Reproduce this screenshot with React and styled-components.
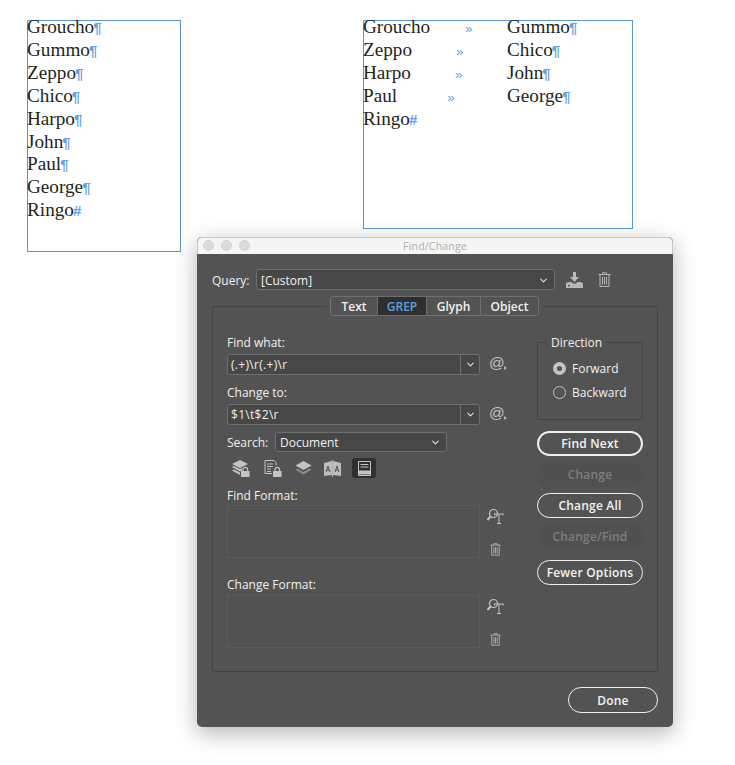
import React from 'react'
import styled, { createGlobalStyle } from 'styled-components'
import { ChevronDown } from 'lucide-react'

const GlobalStyle = createGlobalStyle`
  html, body { margin: 0; padding: 0; background: #ffffff; }
  body { font-family: "Open Sans", "Liberation Sans", sans-serif; }
`

const Board = styled.div`
  position: relative;
  width: 735px;
  height: 765px;
  overflow: hidden;
`

const Frame = styled.div`
  position: absolute;
  left: ${p => p.$x}px;
  top: 20px;
  width: ${p => p.$w}px;
  height: ${p => p.$h}px;
  box-sizing: border-box;
  border: 1px solid #5b94d1;
  font-family: "Liberation Serif", serif;
  font-size: 19.2px;
  line-height: 22.9px;
  color: #231f20;
`

const Lines = styled.div`
  margin: -5px 0 0 -1px;
`

const Line = styled.div`
  white-space: nowrap;
`

const TabLine = styled.div`
  display: grid;
  grid-template-columns: 144px 1fr;
  white-space: nowrap;
`

const Mark = styled.span`
  font-family: "Liberation Sans", sans-serif;
  font-weight: 700;
  font-size: 15px;
  line-height: 0;
  color: #64a0e6;
  margin-left: -1px;
`

const TabMark = styled.span`
  font-family: "Liberation Sans", sans-serif;
  font-size: 13px;
  line-height: 0;
  color: #64a0e6;
  margin-left: ${p => p.$gap}px;
`

const Shadow = styled.div`
  position: absolute;
  left: 197px;
  top: 237px;
  width: 476px;
  height: 490px;
  border-radius: 5px;
  box-shadow: 0 6px 22px rgba(0, 0, 0, 0.3);
`

const Dialog = styled.div`
  position: absolute;
  left: 197px;
  top: 237px;
  width: 476px;
  height: 490px;
  display: flex;
  flex-direction: column;
  background: #535353;
  border-radius: 5px;
  overflow: hidden;
  color: #f0f0f0;
  font-size: 12px;
`

const TitleBar = styled.div`
  height: 17px;
  flex: none;
  box-sizing: border-box;
  position: relative;
  display: flex;
  align-items: center;
  justify-content: center;
  background: #f5f5f5;
  border: 1px solid #c9c9c9;
  border-bottom: none;
  border-radius: 5px 5px 0 0;
  color: #aeaeae;
  font-size: 10.5px;
  letter-spacing: 0.2px;
`

const Lights = styled.div`
  position: absolute;
  left: 5px;
  top: 2px;
  display: flex;
  gap: 7px;
`

const Light = styled.span`
  width: 11px;
  height: 11px;
  border-radius: 50%;
  background: #dcdcdc;
  border: 1px solid #d2d2d2;
  box-sizing: border-box;
`

const Body = styled.div`
  padding: 15px 15px 0;
  display: flex;
  flex-direction: column;
`

const Row = styled.div`
  display: flex;
  align-items: center;
  margin-top: ${p => p.$mt || 0}px;
  height: ${p => p.$h || 21}px;
`

const Label = styled.div`
  height: 14px;
  line-height: 16px;
  margin-top: ${p => p.$mt || 0}px;
  font-weight: 500;
  white-space: nowrap;
`

const InlineLabel = styled.span`
  width: ${p => p.$w}px;
  padding-top: ${p => p.$pt || 0}px;
  font-weight: 500;
  flex: none;
  white-space: nowrap;
`

const Select = styled.div`
  width: ${p => p.$w}px;
  height: ${p => p.$h || 21}px;
  box-sizing: border-box;
  flex: none;
  display: flex;
  align-items: center;
  justify-content: space-between;
  padding: ${p => p.$pt || 0}px 5px 0 4px;
  background: #474747;
  border: 1px solid #6f6f6f;
  border-radius: 3px;
  font-weight: 500;
`

const Combo = styled.div`
  width: 253px;
  height: 21px;
  box-sizing: border-box;
  flex: none;
  display: flex;
  align-items: center;
  background: #474747;
  border: 1px solid #6f6f6f;
  border-radius: 3px;
  letter-spacing: 0.3px;
  font-weight: 500;
`

const ComboText = styled.span`
  flex: 1;
  padding-left: 3px;
`

const ComboArrow = styled.span`
  width: 18px;
  height: 100%;
  display: flex;
  align-items: center;
  justify-content: center;
  border-left: 1px solid #6f6f6f;
`

const Chevron = styled(ChevronDown)`
  width: 11px;
  height: 11px;
  color: #e6e6e6;
  stroke-width: 2.2;
`

const IconSlot = styled.span`
  display: flex;
  align-items: center;
  margin-left: ${p => p.$ml || 0}px;
  color: #b9b9b9;
`

const AtIcon = styled.span`
  position: relative;
  margin-left: 9px;
  margin-top: -4px;
  font-family: "Liberation Sans", sans-serif;
  font-size: 15.5px;
  color: #c0c0c0;
  width: 17px;
  line-height: 18px;
`

const ArrowTip = styled.i`
  position: absolute;
  left: 15px;
  top: 12px;
  width: 0;
  height: 0;
  border-left: 3px solid #b9b9b9;
  border-top: 2.5px solid transparent;
  border-bottom: 2.5px solid transparent;
`

const TabsRow = styled.div`
  position: relative;
  z-index: 1;
  margin-top: 6px;
  display: flex;
  justify-content: center;
  height: 20px;
  padding-right: 1px;
`

const Tabs = styled.div`
  display: flex;
  height: 20px;
  box-sizing: border-box;
  border: 1px solid #6f6f6f;
  border-radius: 3px;
  background: #535353;
  box-shadow: 0 0 0 3px #535353;
  overflow: hidden;
`

const Tab = styled.div`
  width: ${p => p.$w}px;
  box-sizing: border-box;
  display: flex;
  align-items: center;
  justify-content: center;
  font-weight: 600;
  background: ${p => (p.$active ? '#2f2f2f' : 'transparent')};
  color: ${p => (p.$active ? '#5ba2dc' : '#f0f0f0')};
  border-left: ${p => (p.$first ? 'none' : '1px solid #6f6f6f')};
`

const Group = styled.div`
  margin-top: -10px;
  height: 366px;
  box-sizing: border-box;
  border: 1px solid #434343;
  border-radius: 2px;
  padding: 28px 14px 0 14px;
  display: flex;
  justify-content: space-between;
`

const LeftColumn = styled.div`
  width: 280px;
  display: flex;
  flex-direction: column;
`

const RightColumn = styled.div`
  width: 106px;
  display: flex;
  flex-direction: column;
  padding-top: 7px;
`

const ScopeBar = styled.div`
  display: flex;
  align-items: center;
  margin-top: 6px;
  height: 20px;
`

const ScopeButton = styled.span`
  width: ${p => p.$w}px;
  height: 20px;
  flex: none;
  display: flex;
  align-items: center;
  justify-content: center;
  border-radius: 3px;
  margin-left: ${p => p.$ml || 0}px;
  background: ${p => (p.$active ? '#303030' : 'transparent')};
`

const FormatRow = styled.div`
  display: flex;
  margin-top: ${p => p.$mt || 3}px;
  height: 53px;
`

const FormatBox = styled.div`
  width: 253px;
  box-sizing: border-box;
  flex: none;
  border: 1px solid #5b5b5b;
  background: #525252;
`

const FormatTools = styled.div`
  margin-left: 7px;
  display: flex;
  flex-direction: column;
  align-items: center;
  width: 16px;
  padding-top: 3px;
  gap: 19px;
`

const Direction = styled.div`
  position: relative;
  height: 78px;
  box-sizing: border-box;
  border: 1px solid #434343;
  border-radius: 2px;
  padding: 18px 0 0 15px;
  font-weight: 500;
`

const Legend = styled.span`
  position: absolute;
  left: 9px;
  top: -8px;
  padding: 0 4px;
  background: #535353;
  line-height: 16px;
`

const RadioRow = styled.div`
  display: flex;
  align-items: center;
  gap: 6px;
  height: 14px;
  margin-bottom: 10px;
`

const Radio = styled.span`
  width: 13px;
  height: 13px;
  box-sizing: border-box;
  border-radius: 50%;
  flex: none;
  border: ${p => (p.$on ? '4px solid #c4c4c4' : '1px solid #c4c4c4')};
  background: ${p => (p.$on ? '#535353' : 'transparent')};
`

const Pill = styled.div`
  width: ${p => p.$w || 106}px;
  height: ${p => p.$h || 25}px;
  box-sizing: border-box;
  flex: none;
  margin-top: ${p => p.$mt || 0}px;
  display: flex;
  align-items: center;
  justify-content: center;
  border-radius: 13px;
  font-weight: 600;
  letter-spacing: 0.2px;
  border: ${p => (p.$disabled ? 'none' : `${p.$thick ? 2 : 1}px solid #f0f0f0`)};
  background: ${p => (p.$disabled ? '#505050' : 'transparent')};
  color: ${p => (p.$disabled ? '#7d7d7d' : '#f4f4f4')};
`

const Footer = styled.div`
  display: flex;
  justify-content: flex-end;
  margin-top: 15px;
`

function TrashIcon({ size = 13 }) {
  return (
    <svg width={size} height={size * 1.15} viewBox="0 0 13 15" fill="none" stroke="currentColor" strokeWidth="1">
      <path d="M0.500 2.500h12M4.500 2.500V0.800h4v1.700M2 2.500v12h9v-12M4.500 5v7.500M6.500 5v7.500M8.500 5v7.500" />
    </svg>
  )
}

function DownloadIcon() {
  return (
    <svg width="17" height="16" viewBox="0 0 17 16" fill="currentColor">
      <path d="M7 0h3v5h3l-4.500 5L4 5h3z" />
      <path d="M3 10h2l3.500 2L12 10h2l3 1v5H0v-5z" />
      <rect x="2" y="13" width="2" height="1.400" fill="#535353" />
    </svg>
  )
}

function LockBadge({ x, y }) {
  return (
    <g transform={`translate(${x} ${y})`}>
      <path d="M2 4V2.600a2.300 2.300 0 0 1 4.600 0V4" fill="none" stroke="#c4c4c4" strokeWidth="1.200" />
      <rect x="0" y="4" width="8.600" height="6" rx="0.600" fill="#c4c4c4" />
    </g>
  )
}

function LayersLockIcon() {
  return (
    <svg width="18" height="18" viewBox="0 0 18 18">
      <path d="M8 1l8 4-8 4-8-4z" fill="#c4c4c4" />
      <path d="M0 8l2-1 6 3 2-1v2.500L8 12.500z" fill="#c4c4c4" />
      <path d="M0 11.500l2-1 6 3v2.500z" fill="#c4c4c4" />
      <LockBadge x={9} y={8} />
    </svg>
  )
}

function DocLockIcon() {
  return (
    <svg width="18" height="18" viewBox="0 0 18 18">
      <path d="M1 1.500h9l2 2v3M1 1.500v13h7" fill="none" stroke="#c4c4c4" strokeWidth="1" />
      <path d="M3 5h6M3 7.500h6M3 10h4M3 12.500h4" stroke="#c4c4c4" strokeWidth="1" />
      <LockBadge x={9} y={8} />
    </svg>
  )
}

function LayersIcon() {
  return (
    <svg width="17" height="16" viewBox="0 0 17 16">
      <path d="M8.500 1l8 4.500-8 4.500-8-4.500z" fill="#c4c4c4" />
      <path d="M2.500 8.500L8.500 12l6-3.500 2 1.200-8 4.800-8-4.800z" fill="#8c8c8c" />
    </svg>
  )
}

function BookIcon() {
  return (
    <svg width="19" height="17" viewBox="0 0 19 17">
      <path d="M1 3l8-2v14l-8 1zM18 3l-8-2v14l8 1z" fill="#bdbdbd" />
      <path d="M3 12l2-6 2 6M3.800 10h2.400M12 12l2-6 2 6M12.800 10h2.400" fill="none" stroke="#535353" strokeWidth="1" />
      <path d="M9.500 0v17" stroke="#c4c4c4" strokeWidth="0.800" />
    </svg>
  )
}

function PageIcon() {
  return (
    <svg width="13" height="15" viewBox="0 0 13 15" fill="none" stroke="#c4c4c4">
      <path d="M0.500 0.500h12v14h-12z" />
      <path d="M2.500 3.500h8M2.500 6h8" />
      <path d="M1 9.500h11v4H1z" fill="#c4c4c4" stroke="none" />
    </svg>
  )
}

function FindTypeIcon() {
  return (
    <svg width="17" height="16" viewBox="0 0 17 16" fill="none" stroke="#c4c4c4">
      <circle cx="6.500" cy="5.500" r="4" strokeWidth="1.200" />
      <path d="M3.500 8.500L0.500 12" strokeWidth="2" />
      <path d="M7 6h9.500M12 6v9M10 15.500h4M7.500 6v1.500M16 6v1.500" strokeWidth="1" />
    </svg>
  )
}

const single = ['Groucho', 'Gummo', 'Zeppo', 'Chico', 'Harpo', 'John', 'Paul', 'George']
const paired = [
  ['Groucho', 'Gummo', 35],
  ['Zeppo', 'Chico', 44],
  ['Harpo', 'John', 44],
  ['Paul', 'George', 50],
]

export default function App() {
  return (
    <Board>
      <GlobalStyle />
      <Frame $x={27} $w={154} $h={232}>
        <Lines>
          {single.map(name => (
            <Line key={name}>{name}<Mark>¶</Mark></Line>
          ))}
          <Line>Ringo<Mark>#</Mark></Line>
        </Lines>
      </Frame>
      <Frame $x={363} $w={270} $h={209}>
        <Lines>
          {paired.map(([a, b, gap]) => (
            <TabLine key={a}>
              <span>{a}<TabMark $gap={gap}>»</TabMark></span>
              <span>{b}<Mark>¶</Mark></span>
            </TabLine>
          ))}
          <Line>Ringo<Mark>#</Mark></Line>
        </Lines>
      </Frame>
      <Shadow />
      <Dialog>
        <TitleBar>
          <Lights><Light /><Light /><Light /></Lights>
          Find/Change
        </TitleBar>
        <Body>
          <Row>
            <InlineLabel $w={44} $pt={1}>Query:</InlineLabel>
            <Select $w={299} $pt={1}>[Custom]<Chevron /></Select>
            <IconSlot $ml={11}><DownloadIcon /></IconSlot>
            <IconSlot $ml={15}><TrashIcon /></IconSlot>
          </Row>
          <TabsRow>
            <Tabs>
              <Tab $w={46} $first>Text</Tab>
              <Tab $w={49} $active>GREP</Tab>
              <Tab $w={54}>Glyph</Tab>
              <Tab $w={58}>Object</Tab>
            </Tabs>
          </TabsRow>
          <Group>
            <LeftColumn>
              <Label>Find what:</Label>
              <Row $mt={5}>
                <Combo><ComboText>(.+)\r(.+)\r</ComboText><ComboArrow><Chevron /></ComboArrow></Combo>
                <AtIcon>@<ArrowTip /></AtIcon>
              </Row>
              <Label $mt={10}>Change to:</Label>
              <Row $mt={5}>
                <Combo><ComboText>$1\t$2\r</ComboText><ComboArrow><Chevron /></ComboArrow></Combo>
                <AtIcon>@<ArrowTip /></AtIcon>
              </Row>
              <Row $mt={7} $h={20}>
                <InlineLabel $w={48}>Search:</InlineLabel>
                <Select $w={172} $h={20}>Document<Chevron /></Select>
              </Row>
              <ScopeBar>
                <ScopeButton $w={18} $ml={5}><LayersLockIcon /></ScopeButton>
                <ScopeButton $w={18} $ml={14}><DocLockIcon /></ScopeButton>
                <ScopeButton $w={17} $ml={13}><LayersIcon /></ScopeButton>
                <ScopeButton $w={19} $ml={11}><BookIcon /></ScopeButton>
                <ScopeButton $w={24} $ml={10} $active><PageIcon /></ScopeButton>
              </ScopeBar>
              <Label $mt={10}>Find Format:</Label>
              <FormatRow>
                <FormatBox />
                <FormatTools>
                  <FindTypeIcon />
                  <IconSlot><TrashIcon size={11} /></IconSlot>
                </FormatTools>
              </FormatRow>
              <Label $mt={19}>Change Format:</Label>
              <FormatRow $mt={4}>
                <FormatBox />
                <FormatTools>
                  <FindTypeIcon />
                  <IconSlot><TrashIcon size={11} /></IconSlot>
                </FormatTools>
              </FormatRow>
            </LeftColumn>
            <RightColumn>
              <Direction>
                <Legend>Direction</Legend>
                <RadioRow><Radio $on />Forward</RadioRow>
                <RadioRow><Radio />Backward</RadioRow>
              </Direction>
              <Pill $mt={11} $thick>Find Next</Pill>
              <Pill $mt={6} $disabled>Change</Pill>
              <Pill $mt={6}>Change All</Pill>
              <Pill $mt={6} $disabled>Change/Find</Pill>
              <Pill $mt={11}>Fewer Options</Pill>
            </RightColumn>
          </Group>
          <Footer>
            <Pill $w={90} $h={26}>Done</Pill>
          </Footer>
        </Body>
      </Dialog>
    </Board>
  )
}
